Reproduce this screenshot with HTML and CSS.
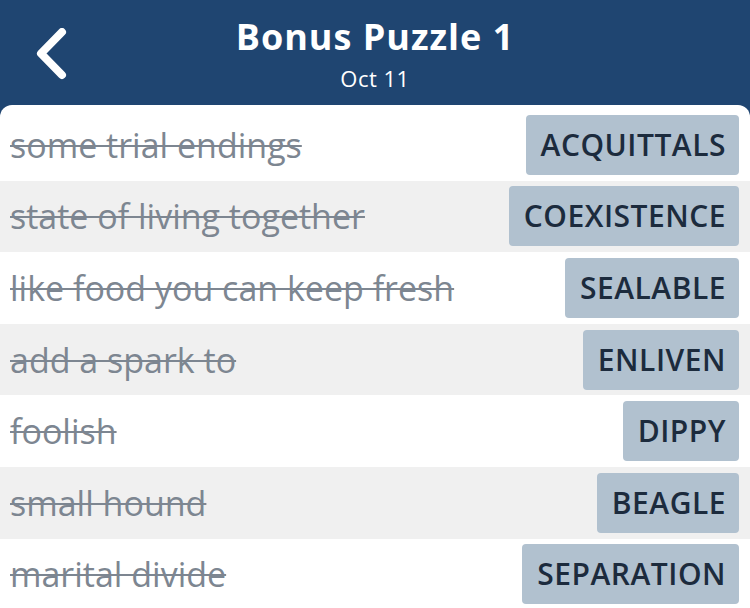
FILE: index.html
```html
<!DOCTYPE html>
<html lang="en">
    <head>
        <meta charset="UTF-8">
        <meta name="viewport" content="width=device-width,initial-scale=1.0">
        <title>Bonus Puzzle 1</title>
        <link rel="stylesheet" href="styles.css">
    </head>
    <body>
        <div class="header">
            <button class="back" aria-label="Back">
                <svg width="36" height="52" viewBox="0 0 36 52">
                    <path d="M29 4 L8 25.5 L29 47" fill="none" stroke="#fff" stroke-width="8" stroke-linecap="round" stroke-linejoin="round"/>
                </svg>
            </button>
            <h1>Bonus Puzzle 1</h1>
            <div class="date">Oct 11</div>
        </div>
        <ul class="clues">
            <li><span class="clue">some trial endings</span><span class="answer">ACQUITTALS</span></li>
            <li><span class="clue">state of living together</span><span class="answer">COEXISTENCE</span></li>
            <li><span class="clue">like food you can keep fresh</span><span class="answer">SEALABLE</span></li>
            <li><span class="clue">add a spark to</span><span class="answer">ENLIVEN</span></li>
            <li><span class="clue">foolish</span><span class="answer">DIPPY</span></li>
            <li><span class="clue">small hound</span><span class="answer">BEAGLE</span></li>
            <li><span class="clue">marital divide</span><span class="answer">SEPARATION</span></li>
        </ul>
    </body>
</html>
```

FILE: styles.css
```css
body {
    font-family: 'Open Sans', 'Lato', sans-serif;
    margin: 0;
    background: #1f4571;
    overflow: hidden;
}

.header {
    height: 105px;
    box-sizing: border-box;
    padding-top: 13px;
    text-align: center;
    color: white;
    position: relative;
}

.back {
    position: absolute;
    left: 33px;
    top: 28px;
    background: none;
    border: none;
    padding: 0;
}

h1 {
    margin: 0;
    font-size: 36px;
    line-height: 48px;
    font-weight: 700;
    letter-spacing: 1px;
}

.date {
    margin-top: 0;
    font-size: 22px;
    line-height: 34px;
    letter-spacing: 0.5px;
}

.clues {
    list-style-type: none;
    margin: 0;
    padding: 4px 0 0;
    background: white;
    border-radius: 12px 12px 0 0;
    height: 503px;
}

.clues li {
    display: flex;
    justify-content: space-between;
    align-items: center;
    height: 71.6px;
    padding: 0 11px 0 10px;
    box-sizing: border-box;
}

.clues li:nth-child(even) {
    background-color: #f0f0f0;
}

.clue {
    font-size: 34px;
    color: #7d8691;
    text-decoration: line-through;
    text-decoration-thickness: 2px;
    white-space: nowrap;
}

.answer {
    background-color: #b1c1cf;
    color: #1c2b3d;
    font-size: 30px;
    font-weight: 600;
    letter-spacing: 0.5px;
    line-height: 60px;
    padding: 0 13px 0 15px;
    border-radius: 4px;
}
```
